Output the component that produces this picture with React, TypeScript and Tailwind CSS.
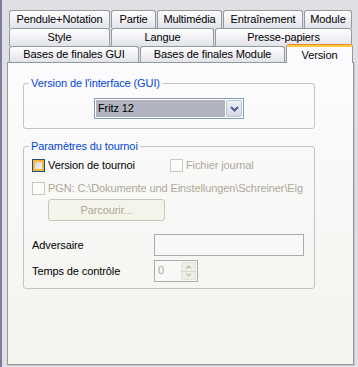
// Options dialog – "Version" tab (Windows XP silver look)

type TabProps = { label: string; className: string };

function Tab({ label, className }: TabProps) {
  return (
    <div
      className={`flex items-center justify-center border border-b-0 border-[#919b9c] rounded-t-[3px] bg-gradient-to-b from-white to-[#e2e2ea] text-black ${className}`}
    >
      {label}
    </div>
  );
}

function ActiveTab({ label }: { label: string }) {
  return (
    <div className="relative z-10 -mb-[1px] flex h-[19px] w-[67px] flex-col overflow-hidden rounded-t-[3px] border-x border-[#919b9c] bg-[#fcfcfe] text-black">
      <div className="h-[1px] bg-[#e68b2c]" />
      <div className="h-[2px] bg-[#ffc73c]" />
      <div className="flex flex-1 items-center justify-center">{label}</div>
    </div>
  );
}

function Checkbox({ hot, disabled }: { hot?: boolean; disabled?: boolean }) {
  if (hot) {
    return (
      <div className="h-[13px] w-[13px] shrink-0 border border-[#1c5180] bg-[#f8b636] p-[2px]">
        <div className="h-full w-full bg-gradient-to-br from-[#d6d6cf] to-[#f6f6f2]" />
      </div>
    );
  }
  return (
    <div
      className={`h-[13px] w-[13px] shrink-0 border ${disabled ? 'border-[#cac8bb] bg-[#fcfcfb]' : 'border-[#1c5180] bg-white'}`}
    />
  );
}

function GroupBox({ title, className, children }: { title: string; className: string; children: React.ReactNode }) {
  return (
    <fieldset className={`rounded-[3px] border border-[#c3c3ca] ${className}`}>
      <legend className="ml-[5px] px-[2px] leading-[13px] text-[#0046d5]">{title}</legend>
      {children}
    </fieldset>
  );
}

export default function App() {
  return (
    <div className="flex h-[367px] w-[358px] overflow-hidden bg-[#e0dfe3] font-['Liberation_Sans',Arial,sans-serif] text-[11px] leading-[13px] tracking-[-0.1px]">
      {/* window edge */}
      <div className="w-[2px] bg-[#7c7c9e]" />

      <div className="flex flex-col pl-[5px] pt-[10px]">
        {/* Tab rows */}
        <div className="ml-[2px] flex h-[18px] gap-[1px]">
          <Tab label="Pendule+Notation" className="w-[101px]" />
          <Tab label="Partie" className="w-[45px]" />
          <Tab label="Multimédia" className="w-[65px]" />
          <Tab label="Entraînement" className="w-[80px]" />
          <Tab label="Module" className="w-[48px]" />
        </div>
        <div className="ml-[2px] flex h-[18px] gap-[1px]">
          <Tab label="Style" className="w-[101px]" />
          <Tab label="Langue" className="w-[103px]" />
          <Tab label="Presse-papiers" className="w-[137px]" />
        </div>
        <div className="ml-[2px] flex h-[16px] items-end gap-[1px]">
          <Tab label="Bases de finales GUI" className="h-[16px] w-[130px]" />
          <Tab label="Bases de finales Module" className="h-[16px] w-[145px]" />
          <ActiveTab label="Version" />
        </div>

        {/* Panel */}
        <div className="flex h-[303px] w-[347px] flex-col border border-[#919b9c] bg-gradient-to-b from-[#fcfcfe] to-[#f4f3ee] shadow-[1px_1px_0_#c6c5cc]">
          <GroupBox title="Version de l'interface (GUI)" className="ml-[15px] mt-[14px] w-[292px] pb-[9px]">
            <div className="ml-[70px] mt-[8px] flex h-[21px] w-[150px] border border-[#7f9db9] bg-white">
              <div className="m-[1px] flex flex-1 items-center bg-[#b1b3bf] pl-[2px] text-black">Fritz 12</div>
              <div className="my-[1px] mr-[1px] flex w-[16px] items-center justify-center rounded-[2px] border border-[#bcc4d6] bg-gradient-to-b from-[#eef0f7] to-[#d3d8e6]">
                <svg width="9" height="6" viewBox="0 0 9 6">
                  <path d="M1 1 L4.5 4.5 L8 1" fill="none" stroke="#4d6185" strokeWidth="2" />
                </svg>
              </div>
            </div>
          </GroupBox>

          <GroupBox title="Paramètres du tournoi" className="ml-[15px] mt-[11px] w-[292px] pb-[6px]">
            <div className="ml-[8px] mt-[6px] flex h-[13px] items-center">
              <div className="flex w-[138px] items-center">
                <Checkbox hot />
                <span className="ml-[3px] text-black">Version de tournoi</span>
              </div>
              <Checkbox disabled />
              <span className="ml-[3px] text-[#aca899]">Fichier journal</span>
            </div>

            <div className="ml-[8px] mt-[10px] flex h-[13px] items-center whitespace-nowrap">
              <Checkbox disabled />
              <span className="ml-[3px] text-[#aca899]">PGN: C:\Dokumente und Einstellungen\Schreiner\Eig</span>
            </div>

            <div className="ml-[24px] mt-[4px] flex h-[22px] w-[117px] items-center justify-center rounded-[3px] border border-[#c9c7ba] bg-[#f5f4ea] text-[#aca899]">
              Parcourir...
            </div>

            <div className="ml-[8px] mt-[13px] flex h-[22px] items-center">
              <span className="w-[122px] text-black">Adversaire</span>
              <div className="h-[22px] w-[150px] border border-[#a7abb2] bg-[#f8f8f6]" />
            </div>

            <div className="ml-[8px] mt-[4px] flex h-[22px] items-center">
              <span className="w-[122px] text-black">Temps de contrôle</span>
              <div className="flex h-[22px] w-[44px] border border-[#a7abb2] bg-[#f8f8f6]">
                <span className="flex-1 pl-[3px] pt-[3px] text-[#aca899]">0</span>
                <div className="my-[1px] mr-[1px] flex w-[15px] flex-col">
                  <div className="flex flex-1 items-center justify-center rounded-t-[2px] border border-b-0 border-[#e2e1d8] bg-[#efeee7]">
                    <svg width="7" height="4" viewBox="0 0 7 4">
                      <path d="M1 3.5 L3.5 1 L6 3.5" fill="none" stroke="#c6c4b6" strokeWidth="1.5" />
                    </svg>
                  </div>
                  <div className="h-[1px] bg-[#d8d7ce]" />
                  <div className="flex flex-1 items-center justify-center rounded-b-[2px] border border-t-0 border-[#e2e1d8] bg-[#efeee7]">
                    <svg width="7" height="4" viewBox="0 0 7 4">
                      <path d="M1 0.5 L3.5 3 L6 0.5" fill="none" stroke="#c6c4b6" strokeWidth="1.5" />
                    </svg>
                  </div>
                </div>
              </div>
            </div>
          </GroupBox>
        </div>
      </div>
    </div>
  );
}
